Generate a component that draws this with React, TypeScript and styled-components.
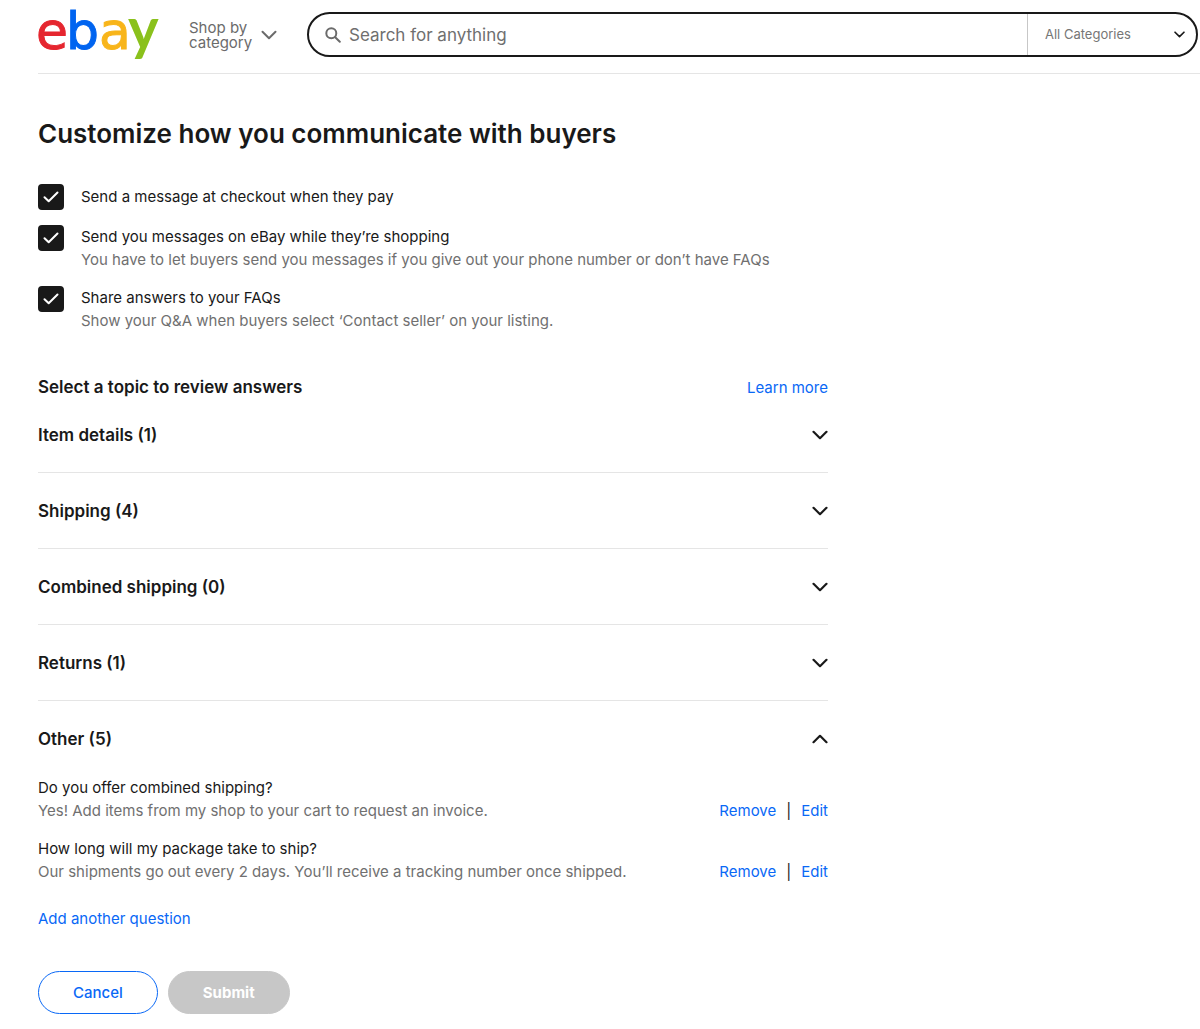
import React, { useState } from "react";
import styled, { createGlobalStyle } from "styled-components";

const GlobalStyle = createGlobalStyle`
  *, *::before, *::after { box-sizing: border-box; }
  body {
    margin: 0;
    background: #fff;
    color: #191919;
    font-family: Inter, "Liberation Sans", sans-serif;
    font-size: 15px;
    line-height: 23px;
  }
  button, input, select { font: inherit; color: inherit; }
  h1, h2, h3, p, ul { margin: 0; padding: 0; }
  svg { flex: none; }
`;

const Header = styled.header`
  display: flex;
  align-items: center;
  height: 74px;
  margin-left: 38px;
  padding: 0 2px 4px 0;
  border-bottom: 1px solid #e5e5e5;
`;

const LogoLink = styled.a`
  display: block;
  width: 126px;
  height: 68px;
  svg { display: block; overflow: visible; }
`;

const ShopButton = styled.button`
  display: flex;
  align-items: center;
  gap: 8px;
  margin: 0 30px 0 25px;
  padding: 0;
  width: 88px;
  border: 0;
  background: none;
  color: #6b6b6b;
  font-size: 15px;
  line-height: 15px;
  text-align: left;
  cursor: pointer;
  span { width: 64px; }
`;

const SearchForm = styled.form`
  display: flex;
  align-items: stretch;
  flex: 1;
  height: 45px;
  border: 2px solid #191919;
  border-radius: 23px;
  overflow: hidden;
`;

const SearchField = styled.label`
  display: flex;
  align-items: center;
  flex: 1;
  gap: 8px;
  padding-left: 16px;
  color: #6b6b6b;
`;

const SearchInput = styled.input`
  flex: 1;
  min-width: 0;
  padding: 0;
  border: 0;
  outline: 0;
  background: none;
  font-size: 17px;
  line-height: 24px;
  &::placeholder { color: #6f6f6f; opacity: 1; }
`;

const CategoryBox = styled.div`
  display: flex;
  align-items: center;
  width: 169px;
  padding-right: 11px;
  border-left: 1px solid #c7c7c7;
`;

const CategorySelect = styled.select`
  flex: 1;
  height: 100%;
  padding: 0 0 0 17px;
  border: 0;
  outline: 0;
  background: none;
  appearance: none;
  color: #767676;
  font-size: 13px;
`;

const Main = styled.main`
  max-width: 866px;
  padding: 42px 38px 16px;
`;

const Title = styled.h1`
  font-size: 26px;
  font-weight: 600;
  line-height: 36px;
`;

const Options = styled.div`
  display: grid;
  gap: 15px;
  margin-top: 32px;
`;

const OptionRow = styled.div`
  display: flex;
  gap: 17px;
`;

const CheckBox = styled.span`
  display: grid;
  flex: none;
  width: 26px;
  height: 26px;
  input, svg { grid-area: 1 / 1; }
  svg { place-self: center; pointer-events: none; visibility: hidden; }
  input:checked + svg { visibility: visible; }
`;

const CheckInput = styled.input`
  width: 26px;
  height: 26px;
  margin: 0;
  border: 2px solid #191919;
  border-radius: 4px;
  background: #fff;
  appearance: none;
  &:checked { background: #191919; }
`;

const OptionLabel = styled.label<{ $single: boolean }>`
  display: block;
  line-height: ${(p) => (p.$single ? 26 : 23)}px;
`;

const Muted = styled.p`
  color: #707070;
`;

const TopicsHead = styled.div`
  display: flex;
  align-items: center;
  justify-content: space-between;
  margin-top: 44px;
`;

const TopicsTitle = styled.h2`
  font-size: 17px;
  font-weight: 600;
  line-height: 23px;
`;

const Link = styled.a`
  color: #0968f6;
  text-decoration: none;
`;

const TopicList = styled.div`
  margin-top: -2px;
`;

const Topic = styled.section`
  border-bottom: 1px solid #e5e5e5;
  &:last-child { border-bottom: 0; }
`;

const TopicHeading = styled.h3`
  font-size: 17px;
  font-weight: 600;
  line-height: 24px;
`;

const TopicButton = styled.button`
  display: flex;
  align-items: center;
  justify-content: space-between;
  width: 100%;
  height: 75px;
  padding: 0;
  border: 0;
  background: none;
  text-align: left;
  cursor: pointer;
`;

const Questions = styled.ul`
  display: grid;
  gap: 15px;
  list-style: none;
`;

const Question = styled.li`
  display: flex;
  align-items: flex-end;
  justify-content: space-between;
  gap: 16px;
`;

const Actions = styled.div`
  display: flex;
  gap: 10px;
`;

const TextButton = styled.button`
  padding: 0;
  border: 0;
  background: none;
  color: #0968f6;
  cursor: pointer;
`;

const AddRow = styled.div`
  margin-top: 24px;
`;

const Footer = styled.footer`
  display: flex;
  gap: 10px;
  margin-top: 41px;
`;

const PillButton = styled.button<{ $primary?: boolean }>`
  height: 43px;
  padding: 0 34px;
  border: 1px solid ${(p) => (p.$primary ? "#c7c7c7" : "#0968f6")};
  border-radius: 22px;
  background: ${(p) => (p.$primary ? "#c7c7c7" : "#fff")};
  color: ${(p) => (p.$primary ? "#fff" : "#0968f6")};
  font-weight: ${(p) => (p.$primary ? 700 : 500)};
`;

function Chevron({ width, up = false, stroke = 2 }: { width: number; up?: boolean; stroke?: number }) {
  return (
    <svg width={width} height={(width * 10) / 16} viewBox="0 0 16 10" fill="none" aria-hidden="true">
      <path
        d={up ? "M1.5 8.2 8 1.8l6.5 6.4" : "M1.5 1.8 8 8.2l6.5-6.4"}
        stroke="currentColor"
        strokeWidth={stroke}
        strokeLinecap="round"
        strokeLinejoin="round"
      />
    </svg>
  );
}

function Logo() {
  return (
    <svg width="126" height="68" viewBox="0 0 126 68" fontFamily="'DejaVu Sans', sans-serif" fontSize="52" strokeWidth="1" aria-hidden="true">
      <text x="-2" y="48" fill="#e5262f" stroke="#e5262f">e</text>
      <text x="28" y="48" fill="#0064f0" stroke="#0064f0">b</text>
      <text x="61" y="48" fill="#f8b51a" stroke="#f8b51a">a</text>
      <text x="90" y="48" fill="#8ac11c" fontFamily="Lato, sans-serif" fontSize="58" fontWeight="700">y</text>
    </svg>
  );
}

const options = [
  { id: "checkout", label: "Send a message at checkout when they pay", note: "" },
  {
    id: "shopping",
    label: "Send you messages on eBay while they’re shopping",
    note: "You have to let buyers send you messages if you give out your phone number or don’t have FAQs",
  },
  {
    id: "faqs",
    label: "Share answers to your FAQs",
    note: "Show your Q&A when buyers select ‘Contact seller’ on your listing.",
  },
];

const topics = ["Item details (1)", "Shipping (4)", "Combined shipping (0)", "Returns (1)", "Other (5)"];

const questions = [
  { q: "Do you offer combined shipping?", a: "Yes! Add items from my shop to your cart to request an invoice." },
  {
    q: "How long will my package take to ship?",
    a: "Our shipments go out every 2 days. You’ll receive a tracking number once shipped.",
  },
];

export default function App() {
  const [open, setOpen] = useState("Other (5)");
  return (
    <>
      <GlobalStyle />
      <Header>
        <LogoLink href="#" aria-label="eBay home"><Logo /></LogoLink>
        <ShopButton type="button">
          <span>Shop by category</span>
          <Chevron width={16} />
        </ShopButton>
        <SearchForm role="search">
          <SearchField>
            <svg width="16" height="16" viewBox="0 0 16 16" fill="none" stroke="currentColor" strokeWidth="2" strokeLinecap="round" aria-hidden="true">
              <circle cx="6.3" cy="6.3" r="5" />
              <path d="m10.2 10.2 4.6 4.6" />
            </svg>
            <SearchInput type="text" placeholder="Search for anything" aria-label="Search for anything" />
          </SearchField>
          <CategoryBox>
            <CategorySelect aria-label="Category">
              <option>All Categories</option>
            </CategorySelect>
            <Chevron width={11} stroke={2.4} />
          </CategoryBox>
        </SearchForm>
      </Header>
      <Main>
        <Title>Customize how you communicate with buyers</Title>
        <Options>
          {options.map((o) => (
            <OptionRow key={o.id}>
              <CheckBox>
                <CheckInput type="checkbox" id={o.id} defaultChecked />
                <svg width="16" height="12" viewBox="0 0 16 12" fill="none" aria-hidden="true">
                  <path d="m1.5 6.2 4.2 4.1L14.5 1.5" stroke="#fff" strokeWidth="2" strokeLinecap="round" strokeLinejoin="round" />
                </svg>
              </CheckBox>
              <div>
                <OptionLabel htmlFor={o.id} $single={!o.note}>{o.label}</OptionLabel>
                {o.note && <Muted>{o.note}</Muted>}
              </div>
            </OptionRow>
          ))}
        </Options>
        <TopicsHead>
          <TopicsTitle>Select a topic to review answers</TopicsTitle>
          <Link href="#">Learn more</Link>
        </TopicsHead>
        <TopicList>
          {topics.map((t) => (
            <Topic key={t}>
              <TopicHeading>
                <TopicButton type="button" aria-expanded={open === t} onClick={() => setOpen(open === t ? "" : t)}>
                  {t}
                  <Chevron width={16} up={open === t} stroke={2.2} />
                </TopicButton>
              </TopicHeading>
              {open === t && t === "Other (5)" && (
                <>
                  <Questions>
                    {questions.map((item) => (
                      <Question key={item.q}>
                        <div>
                          <p>{item.q}</p>
                          <Muted>{item.a}</Muted>
                        </div>
                        <Actions>
                          <TextButton type="button">Remove</TextButton>
                          <span>|</span>
                          <TextButton type="button">Edit</TextButton>
                        </Actions>
                      </Question>
                    ))}
                  </Questions>
                  <AddRow>
                    <TextButton type="button">Add another question</TextButton>
                  </AddRow>
                </>
              )}
            </Topic>
          ))}
        </TopicList>
        <Footer>
          <PillButton type="button">Cancel</PillButton>
          <PillButton type="submit" $primary>Submit</PillButton>
        </Footer>
      </Main>
    </>
  );
}
